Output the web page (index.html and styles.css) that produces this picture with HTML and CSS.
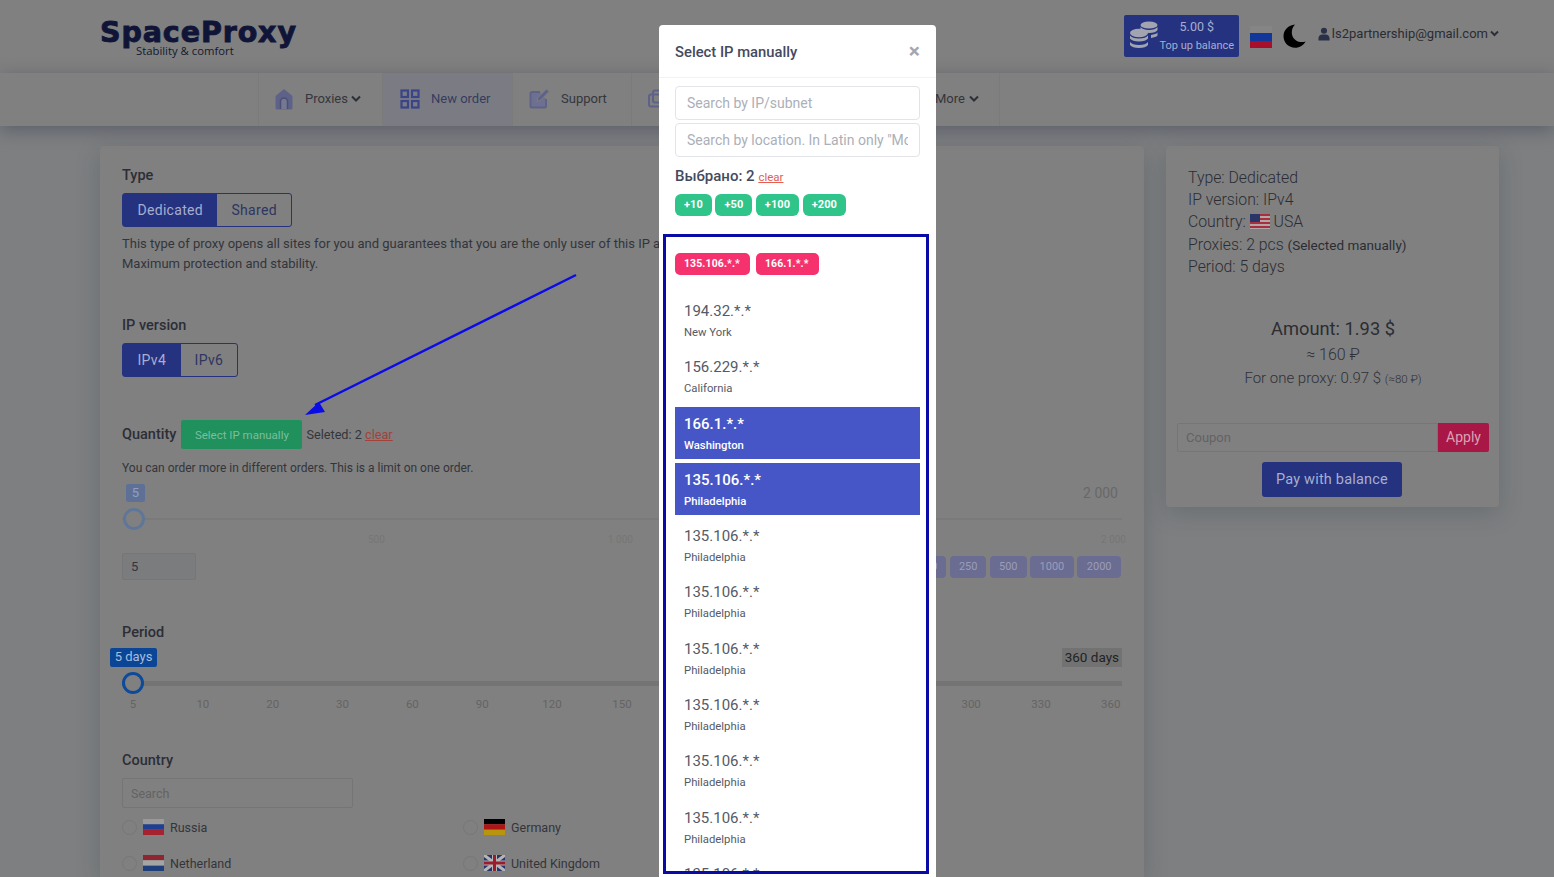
FILE: index.html
```html
<!DOCTYPE html>
<html lang="en">
<head>
    <meta charset="UTF-8">
    <meta name="viewport" content="width=device-width, initial-scale=1.0">
    <title>SpaceProxy - New order</title>
    <link rel="stylesheet" href="styles.css">
</head>
<body>
    <header class="topbar">
        <div class="logo">
            <span class="logo-name">SpaceProxy</span>
            <span class="logo-tag">Stability &amp; comfort</span>
        </div>
        <div class="topbar-right">
            <a class="balance">
                <svg class="coins" width="30" height="32" viewBox="0 0 30 32">
                    <g fill="#a2a5b0">
                        <ellipse cx="20" cy="5" rx="8.500" ry="3.600"/>
                        <path d="M11.500 7c1.500 2 4.500 3 8.500 3s7-1 8.500-3v3c-1 2-4 3-8.500 3-1.500 0-3-.2-4-.5-2-1-4-2-4.500-3z"/>
                        <path d="M22 15c3-.4 5.500-1.200 6.500-2.500v3c-1 1.300-3.500 2.100-6.500 2.500z"/>
                        <ellipse cx="10" cy="13" rx="9" ry="4.200"/>
                        <path d="M1 15.500c1.500 2 4.500 3 9 3s7.500-1 9-3v3c-1.500 2-4.500 3-9 3s-7.500-1-9-3z"/>
                        <path d="M1 22c1.500 2 4.500 3 9 3s7.500-1 9-3v3c-1.500 2-4.500 3-9 3s-7.500-1-9-3z"/>
                    </g>
                </svg>
                <span class="balance-text">
                    <span class="balance-sum">5.00 $</span>
                    <span class="balance-label">Top up balance</span>
                </span>
            </a>
            <svg class="top-flag" width="22" height="22" viewBox="0 0 22 22">
                <rect width="22" height="7" fill="#858585"/>
                <rect y="7" width="22" height="8" fill="#12379a"/>
                <rect y="15" width="22" height="7" fill="#a80f2a"/>
            </svg>
            <svg class="moon" width="24" height="24" viewBox="0 0 24 24">
                <path d="M12 0.500C5.500 1 0.500 6 0.500 12.300c0 6.400 5.200 11.500 11.600 11.500 4.500 0 8.700-2.600 10.500-6.300-1 .5-2.300.6-3.500.6-6.200 0-10.300-4.300-10.300-9.700C8.800 5.300 10 2.500 12 .5z" fill="#000"/>
            </svg>
            <div class="account">
                <svg width="12" height="14" viewBox="0 0 13 14"><circle cx="6.500" cy="3.500" r="3.300" fill="#2a3048"/><path d="M0.500 14v-2.500C.5 9 2.500 7.500 4.500 7.500h4c2 0 4 1.500 4 4V14z" fill="#2a3048"/></svg>
                <span>ls2partnership@gmail.com</span>
                <svg class="chev" width="9" height="7" viewBox="0 0 9 7"><path d="M1 1.500l3.500 3.500L8 1.500" fill="none" stroke="#2c2f38" stroke-width="2"/></svg>
            </div>
        </div>
    </header>

    <nav class="nav">
        <a class="nav-item nav-proxies">
            <svg width="20" height="22" viewBox="0 0 20 22"><path d="M10 1L1.500 8v12a1.500 1.500 0 0 0 1.500 1.500h14a1.500 1.500 0 0 0 1.500-1.500V8z" fill="#5e6288"/><path d="M6.500 21v-7.500a3.500 3.500 0 0 1 7 0V21" fill="#767890" stroke="#4a4f78" stroke-width="1.500"/></svg>
            <span>Proxies</span>
            <svg class="chev" width="10" height="7" viewBox="0 0 10 7"><path d="M1 1.500l4 4 4-4" fill="none" stroke="#2c2f38" stroke-width="2"/></svg>
        </a>
        <a class="nav-item nav-active">
            <svg width="20" height="20" viewBox="0 0 20 20" fill="none" stroke="#3a4488" stroke-width="2.200"><rect x="1.500" y="1.500" width="6.500" height="6.500"/><rect x="12" y="1.500" width="6.500" height="6.500"/><rect x="1.500" y="12" width="6.500" height="6.500"/><rect x="12" y="12" width="6.500" height="6.500"/></svg>
            <span>New order</span>
        </a>
        <a class="nav-item nav-support">
            <svg width="21" height="21" viewBox="0 0 21 21"><path d="M11 4H3a1.500 1.500 0 0 0-1.500 1.500V18A1.500 1.500 0 0 0 3 19.500h12.500A1.500 1.500 0 0 0 17 18v-7" fill="#6d7090" stroke="#5e6288" stroke-width="2"/><path d="M8 13.500l1-4L17.500 1 20 3.500 11.800 12z" fill="#5e6288" stroke="#808080" stroke-width=".8"/></svg>
            <span>Support</span>
        </a>
        <a class="nav-item nav-hidden">
            <svg width="20" height="20" viewBox="0 0 20 20" fill="none" stroke="#5e6288" stroke-width="2"><rect x="6" y="1.500" width="12" height="12" rx="2"/><rect x="2" y="5.500" width="12" height="12" rx="2"/></svg>
        </a>
        <a class="nav-item nav-more">
            <span>More</span>
            <svg class="chev" width="10" height="7" viewBox="0 0 10 7"><path d="M1 1.500l4 4 4-4" fill="none" stroke="#2c2f38" stroke-width="2"/></svg>
        </a>
    </nav>

    <main class="content">
        <section class="card order-card">
            <h3 class="label">Type</h3>
            <div class="toggle">
                <span class="toggle-on">Dedicated</span>
                <span class="toggle-off">Shared</span>
            </div>
            <p class="desc">This type of proxy opens all sites for you and guarantees that you are the only user of this IP address.<br>Maximum protection and stability.</p>

            <h3 class="label label-ip">IP version</h3>
            <div class="toggle">
                <span class="toggle-on">IPv4</span>
                <span class="toggle-off">IPv6</span>
            </div>

            <div class="quantity-row">
                <h3 class="label">Quantity</h3>
                <a class="btn-manual">Select IP manually</a>
                <span class="seleted">Seleted: 2 <a class="clear">clear</a></span>
            </div>
            <p class="limit">You can order more in different orders. This is a limit on one order.</p>

            <div class="slider slider-qty">
                <span class="tip tip-qty">5</span>
                <span class="tip-max">2 000</span>
                <div class="track"></div>
                <span class="handle handle-qty"></span>
                <div class="qty-marks"><span>500</span><span>1 000</span><span>2 000</span></div>
            </div>
            <div class="qty-inputs">
                <input class="qty-input" type="text" value="5" disabled>
                <div class="qty-btns">
                    <span>100</span><span>250</span><span>500</span><span>1000</span><span>2000</span>
                </div>
            </div>

            <h3 class="label label-period">Period</h3>
            <div class="slider slider-period">
                <span class="tip tip-period">5 days</span>
                <span class="tip-end">360 days</span>
                <div class="track track-dark"></div>
                <span class="handle"></span>
                <div class="period-marks">
                    <span>5</span><span>10</span><span>20</span><span>30</span><span>60</span>
                    <span>90</span><span>120</span><span>150</span><span>180</span><span>210</span>
                    <span>240</span><span>270</span><span>300</span><span>330</span><span>360</span>
                </div>
            </div>

            <h3 class="label label-country">Country</h3>
            <input class="country-search" type="text" placeholder="Search">
            <div class="countries">
                <label class="country">
                    <span class="radio"></span>
                    <svg width="21" height="16" viewBox="0 0 21 16"><rect width="21" height="5.300" fill="#9a9a9a"/><rect y="5.300" width="21" height="5.400" fill="#1f3f93"/><rect y="10.700" width="21" height="5.300" fill="#a5222f"/></svg>
                    <span>Russia</span>
                </label>
                <label class="country">
                    <span class="radio"></span>
                    <svg width="21" height="16" viewBox="0 0 21 16"><rect width="21" height="5.300" fill="#000"/><rect y="5.300" width="21" height="5.400" fill="#b01515"/><rect y="10.700" width="21" height="5.300" fill="#b8950f"/></svg>
                    <span>Germany</span>
                </label>
                <label class="country">
                    <span class="radio"></span>
                    <svg width="21" height="16" viewBox="0 0 21 16"><rect width="21" height="5.300" fill="#8f2530"/><rect y="5.300" width="21" height="5.400" fill="#a5a5a5"/><rect y="10.700" width="21" height="5.300" fill="#1f3f7a"/></svg>
                    <span>Netherland</span>
                </label>
                <label class="country">
                    <span class="radio"></span>
                    <svg width="21" height="16" viewBox="0 0 21 16"><rect width="21" height="16" fill="#27346a"/><path d="M0 0l21 16M21 0L0 16" stroke="#b5b5b5" stroke-width="3"/><path d="M10.500 0v16M0 8h21" stroke="#b5b5b5" stroke-width="5"/><path d="M10.500 0v16M0 8h21" stroke="#9b1c2e" stroke-width="3"/></svg>
                    <span>United Kingdom</span>
                </label>
            </div>
        </section>

        <aside class="card summary-card">
            <div class="summary-lines">
                <div>Type: Dedicated</div>
                <div>IP version: IPv4</div>
                <div>Country: <svg class="usa" width="20" height="15" viewBox="0 0 20 15"><rect width="20" height="15" fill="#b3a6a6"/><path d="M0 1h20M0 5h20M0 9h20M0 13h20" stroke="#a8303e" stroke-width="2"/><rect width="10" height="8" fill="#2b3668"/></svg> USA</div>
                <div>Proxies: 2 pcs <span class="manual-note">(Selected manually)</span></div>
                <div>Period: 5 days</div>
            </div>
            <div class="amount">Amount: 1.93 $</div>
            <div class="amount-rub">≈ 160 ₽</div>
            <div class="amount-one">For one proxy: 0.97 $ <small>(≈80 ₽)</small></div>
            <div class="coupon">
                <input type="text" placeholder="Coupon">
                <button type="button">Apply</button>
            </div>
            <button class="pay" type="button">Pay with balance</button>
        </aside>
    </main>

    <div class="modal">
        <div class="modal-head">
            <h5>Select IP manually</h5>
            <span class="modal-close">×</span>
        </div>
        <div class="modal-filters">
            <input type="text" placeholder="Search by IP/subnet">
            <input type="text" placeholder="Search by location. In Latin only &quot;Moscow&quot;">
            <div class="picked">Выбрано: 2 <a class="clear">clear</a></div>
            <div class="add-btns">
                <span>+10</span><span>+50</span><span>+100</span><span>+200</span>
            </div>
        </div>
        <div class="ip-frame">
            <div class="chips">
                <span>135.106.*.*</span><span>166.1.*.*</span>
            </div>
            <ul class="ip-list">
                <li><b>194.32.*.*</b><small>New York</small></li>
                <li><b>156.229.*.*</b><small>California</small></li>
                <li class="picked-ip"><b>166.1.*.*</b><small>Washington</small></li>
                <li class="picked-ip"><b>135.106.*.*</b><small>Philadelphia</small></li>
                <li><b>135.106.*.*</b><small>Philadelphia</small></li>
                <li><b>135.106.*.*</b><small>Philadelphia</small></li>
                <li><b>135.106.*.*</b><small>Philadelphia</small></li>
                <li><b>135.106.*.*</b><small>Philadelphia</small></li>
                <li><b>135.106.*.*</b><small>Philadelphia</small></li>
                <li><b>135.106.*.*</b><small>Philadelphia</small></li>
                <li><b>135.106.*.*</b><small>Philadelphia</small></li>
            </ul>
        </div>
    </div>

    <svg class="arrow" width="290" height="160" viewBox="0 0 290 160">
        <path d="M281 5L20 135" stroke="#0b0be6" stroke-width="2.500" fill="none"/>
        <path d="M10 145L24 132L30 142z" fill="#0b0be6"/>
    </svg>
</body>
</html>
```

FILE: styles.css
```css
* {
    box-sizing: border-box;
}

html, body {
    height: 877px;
    overflow: hidden;
}

body {
    margin: 0;
    position: relative;
    font-family: Roboto, "Liberation Sans", sans-serif;
    font-size: 13px;
    color: #2f3138;
    background-color: #7d7f81;
}

a {
    color: inherit;
    text-decoration: none;
}

/* header */
.topbar {
    height: 73px;
    background-color: #808080;
    display: flex;
    justify-content: space-between;
    padding: 15px 55px 0 100px;
}

.logo {
    display: flex;
    flex-direction: column;
    width: 200px;
}

.logo-name {
    font-family: "DejaVu Sans", sans-serif;
    font-weight: 700;
    font-size: 28.500px;
    line-height: 36px;
    color: #101538;
    letter-spacing: 0.900px;
    -webkit-text-stroke: 0.900px #101538;
}

.logo-tag {
    font-family: "Open Sans", sans-serif;
    font-size: 11.300px;
    line-height: 12px;
    margin: -6px 0 0 36px;
    color: #15182e;
}

.topbar-right {
    display: flex;
    align-items: flex-start;
}

.balance {
    width: 115px;
    height: 42px;
    background-color: #25327f;
    border-radius: 2px;
    display: flex;
    align-items: center;
    padding: 0 4px 0 5px;
    color: #a6aed0;
}

.coins {
    flex-shrink: 0;
}

.balance-text {
    flex: 1;
    display: flex;
    flex-direction: column;
    align-items: center;
    font-size: 11px;
    line-height: 19px;
    white-space: nowrap;
}

.balance-sum {
    font-size: 12.500px;
}

.top-flag {
    margin: 11px 0 0 11px;
}

.moon {
    margin: 9px 0 0 11px;
}

.account {
    display: flex;
    align-items: center;
    gap: 2px;
    margin: 10px 0 0 11px;
    height: 17px;
    font-size: 13px;
    color: #2a2c33;
}

.chev {
    flex-shrink: 0;
}

/* nav */
.nav {
    height: 53px;
    background-color: #808080;
    display: flex;
    padding-left: 258px;
    box-shadow: 0 4px 18px rgba(30, 35, 60, 0.35);
    position: relative;
}

.nav-item {
    display: flex;
    align-items: center;
    gap: 11px;
    border-left: 1px solid #7b7b7b;
    font-size: 13px;
    color: #34363d;
    padding: 0 0 2px 15px;
}

.nav-item .chev {
    margin-left: -8px;
}

.nav-proxies {
    width: 124px;
}

.nav-active {
    width: 130px;
    padding-left: 17px;
    background-color: #7b7c83;
    color: #353c5e;
}

.nav-support {
    width: 119px;
    padding-left: 16px;
}

.nav-hidden {
    width: 304px;
}

.nav-more {
    width: 65px;
    padding-left: 0;
    border-left: 0;
    border-right: 1px solid #7b7b7b;
    gap: 12px;
}

/* page */
.content {
    display: flex;
    align-items: flex-start;
    gap: 22px;
    padding: 20px 0 0 100px;
}

.card {
    background-color: #808080;
    border-radius: 4px;
    box-shadow: 0 6px 24px rgba(40, 50, 60, 0.22);
}

.order-card {
    width: 1044px;
    height: 731px;
    padding: 21px 22px 0;
    border-radius: 4px 4px 0 0;
}

.label {
    margin: 0;
    font-size: 14.500px;
    font-weight: 500;
    line-height: 18px;
    color: #2c2e36;
}

.toggle {
    display: inline-flex;
    height: 34px;
    margin-top: 8px;
    border: 1px solid #25327f;
    border-radius: 3px;
    font-size: 14px;
    line-height: 32px;
    letter-spacing: 0.300px;
    vertical-align: top;
}

.toggle-on {
    background-color: #25327f;
    color: #a6aed0;
    padding: 0 14.500px;
}

.toggle-off {
    color: #2d3560;
    padding: 0 14px;
}

.desc {
    margin: 7px 0 0;
    line-height: 20px;
    font-size: 13px;
    white-space: nowrap;
    color: #33353b;
}

.label-ip {
    margin-top: 43px;
}

.quantity-row {
    display: flex;
    align-items: center;
    gap: 3px;
    margin-top: 43px;
    height: 29px;
}

.btn-manual {
    width: 121px;
    height: 29px;
    margin-left: 2px;
    background-color: #20905c;
    color: #7abf9e;
    border-radius: 2px;
    font-size: 11.500px;
    line-height: 30px;
    text-align: center;
}

.seleted {
    margin-left: 1px;
    font-size: 12.700px;
    color: #33353b;
}

.clear {
    color: #a3413b;
    text-decoration: underline;
}

.limit {
    margin: 11px 0 0;
    font-size: 12px;
    line-height: 16px;
    color: #33353b;
}

.slider {
    position: relative;
}

.slider-qty {
    height: 69px;
    margin-top: 8px;
}

.track {
    position: absolute;
    top: 34px;
    left: 0;
    right: 0;
    height: 2px;
    background-color: #7a7a7a;
}

.track-dark {
    top: 33px;
    height: 5px;
    background-color: #747474;
}

.tip {
    position: absolute;
    border-radius: 2px;
    text-align: center;
}

.tip-qty {
    left: 4px;
    top: 0;
    width: 19px;
    height: 18px;
    line-height: 18px;
    background-color: #5f7096;
    color: #8da0c2;
    font-size: 13px;
}

.tip-max {
    position: absolute;
    right: 4px;
    top: 0;
    line-height: 18px;
    font-size: 14px;
    color: #686868;
}

.handle {
    position: absolute;
    left: 0;
    top: 24px;
    width: 22px;
    height: 22px;
    border: 3px solid #0d4a9a;
    border-radius: 50%;
    background-color: #808080;
}

.handle-qty {
    top: 24px;
    left: 1px;
    border-color: #5f7698;
}

.qty-marks {
    position: absolute;
    top: 50px;
    left: 0;
    right: 0;
    font-size: 10px;
    line-height: 12px;
    color: #767676;
}

.qty-marks span {
    position: absolute;
}

.qty-marks span:nth-child(1) {
    left: 246px;
}

.qty-marks span:nth-child(2) {
    left: 486px;
}

.qty-marks span:nth-child(3) {
    right: -4px;
}

.qty-inputs {
    display: flex;
    justify-content: space-between;
    align-items: center;
}

.qty-input {
    width: 74px;
    height: 27px;
    padding: 0 8px;
    background-color: #7b7c7e;
    border: 1px solid #767676;
    border-radius: 2px;
    font: 13px Roboto, sans-serif;
    color: #33353b;
    opacity: 1;
}

.qty-btns {
    display: flex;
    gap: 3.500px;
    margin-right: 1px;
}

.qty-btns span {
    height: 22px;
    padding: 0 9px;
    line-height: 22px;
    background-color: #6a6c92;
    border-radius: 4px;
    font-size: 11px;
    color: #9a9db8;
}

.qty-btns span:nth-child(4),
.qty-btns span:nth-child(5) {
    padding: 0 9.500px;
}

.label-period {
    margin-top: 44px;
}

.slider-period {
    height: 72px;
    margin-top: 6px;
}

.tip-period {
    left: -12px;
    top: 0;
    width: 47px;
    height: 19px;
    line-height: 18px;
    background-color: #0b4596;
    color: #a5bede;
    font-size: 13px;
}

.tip-end {
    position: absolute;
    right: 0;
    top: 0;
    height: 19px;
    padding: 0 3px;
    line-height: 19px;
    background-color: #727272;
    color: #222;
    font-size: 13.500px;
}

.period-marks {
    position: absolute;
    top: 49px;
    left: 0;
    right: 0;
    display: flex;
    justify-content: space-between;
    font-size: 11.500px;
    line-height: 14px;
    color: #646464;
}

.period-marks span {
    width: 22px;
    text-align: center;
}

.label-country {
    margin-top: 32px;
}

.country-search {
    display: block;
    width: 231px;
    height: 30px;
    margin-top: 8px;
    padding: 0 8px;
    background: transparent;
    border: 1px solid #757575;
    border-radius: 2px;
    font: 12.500px Roboto, sans-serif;
}

.country-search::placeholder,
.coupon input::placeholder {
    color: #636363;
}

.countries {
    display: grid;
    grid-template-columns: 341px 341px;
    grid-auto-rows: 16px;
    row-gap: 20px;
    margin-top: 11px;
}

.country {
    display: flex;
    align-items: center;
    gap: 6px;
    font-size: 12.500px;
    color: #33353b;
}

.radio {
    width: 15px;
    height: 15px;
    border: 1px solid #777;
    border-radius: 50%;
}

/* right column */
.summary-card {
    width: 333px;
    height: 361px;
    padding: 21px 10px 10px 11px;
}

.summary-lines {
    padding-left: 11px;
    font-size: 15.800px;
    font-weight: 300;
    line-height: 22.200px;
    color: #2b2d33;
    height: 150px;
}

.usa {
    vertical-align: -2px;
}

.manual-note {
    font-size: 13.500px;
    font-weight: 400;
}

.amount {
    text-align: center;
    font-size: 18.300px;
    line-height: 24px;
    color: #2b2d33;
}

.amount-rub {
    margin-top: 3px;
    text-align: center;
    font-size: 16px;
    font-weight: 300;
    line-height: 22px;
}

.amount-one {
    margin-top: 2px;
    text-align: center;
    font-size: 15px;
    font-weight: 300;
    line-height: 20px;
}

.amount-one small {
    font-size: 11.500px;
}

.coupon {
    display: flex;
    height: 29px;
    margin-top: 34px;
}

.coupon input {
    flex: 1;
    min-width: 0;
    padding: 0 8px;
    background: transparent;
    border: 1px solid #767676;
    border-radius: 2px 0 0 2px;
    font: 13px Roboto, sans-serif;
}

.coupon button {
    width: 51px;
    padding-bottom: 2px;
    border: 0;
    border-radius: 0 2px 2px 0;
    background-color: #a91747;
    color: #d9a2b4;
    font: 14px Roboto, sans-serif;
}

.pay {
    display: block;
    width: 140px;
    height: 35px;
    margin: 10px 0 0 85px;
    border: 0;
    border-radius: 3px;
    background-color: #25327f;
    color: #a6aed0;
    font: 14.500px Roboto, sans-serif;
    letter-spacing: 0.200px;
}

/* modal over the page */
.modal {
    position: absolute;
    top: 25px;
    left: 659px;
    width: 277px;
    height: 852px;
    background-color: #fff;
    border-radius: 4px 4px 0 0;
}

.modal-head {
    height: 53px;
    display: flex;
    justify-content: space-between;
    align-items: center;
    padding: 2px 16px 0;
    border-bottom: 1px solid #f2f2f4;
}

.modal-head h5 {
    margin: 0;
    font-size: 14.800px;
    font-weight: 500;
    color: #444a5e;
}

.modal-close {
    margin-top: -2px;
    font-size: 21px;
    font-weight: 700;
    color: #a4a7ad;
    line-height: 20px;
}

.modal-filters {
    padding: 8px 16px 0;
}

.modal-filters input {
    display: block;
    width: 100%;
    height: 34px;
    margin-bottom: 3px;
    padding: 0 11px;
    border: 1px solid #e3e4e9;
    border-radius: 4px;
    font: 14px Roboto, sans-serif;
    outline: none;
}

.modal-filters input::placeholder {
    color: #abafb8;
}

.picked {
    margin-top: 9px;
    font-size: 15px;
    font-weight: 500;
    line-height: 20px;
    color: #444a5e;
}

.picked .clear {
    font-size: 11.500px;
    font-weight: 400;
    color: #e35d50;
}

.add-btns {
    display: flex;
    gap: 3.500px;
    margin-top: 7px;
}

.add-btns span {
    height: 22px;
    padding: 0 9px;
    background-color: #2fc58a;
    border-radius: 6px;
    color: #fff;
    font-size: 11px;
    font-weight: 700;
    line-height: 21px;
    letter-spacing: 0.100px;
}

.ip-frame {
    margin: 18px 7px 0 4px;
    height: 640px;
    border: 3px solid #0a0aa6;
    overflow: hidden;
    padding: 16px 6px 0 9px;
}

.chips {
    display: flex;
    gap: 6px;
}

.chips span {
    height: 22px;
    padding: 0 10px 0 9px;
    background-color: #f5326e;
    border-radius: 5px;
    color: #fff;
    font-size: 10.500px;
    font-weight: 700;
    line-height: 21px;
    letter-spacing: 0.100px;
}

.ip-list {
    list-style: none;
    margin: 19px 0 0;
    padding: 0;
}

.ip-list li {
    height: 52px;
    margin-bottom: 4.300px;
    padding: 7px 9px 0;
    color: #555a66;
}

.ip-list b {
    display: block;
    font-size: 15px;
    font-weight: 400;
    line-height: 20px;
}

.ip-list small {
    display: block;
    margin-top: 4px;
    font-size: 11.300px;
    line-height: 16px;
}

.ip-list .picked-ip {
    background-color: #4656c6;
    color: #fff;
}

.picked-ip b {
    font-weight: 500;
}

.picked-ip small {
    font-weight: 500;
}

/* annotation arrow drawn over the screenshot */
.arrow {
    position: absolute;
    top: 270px;
    left: 295px;
}
```
